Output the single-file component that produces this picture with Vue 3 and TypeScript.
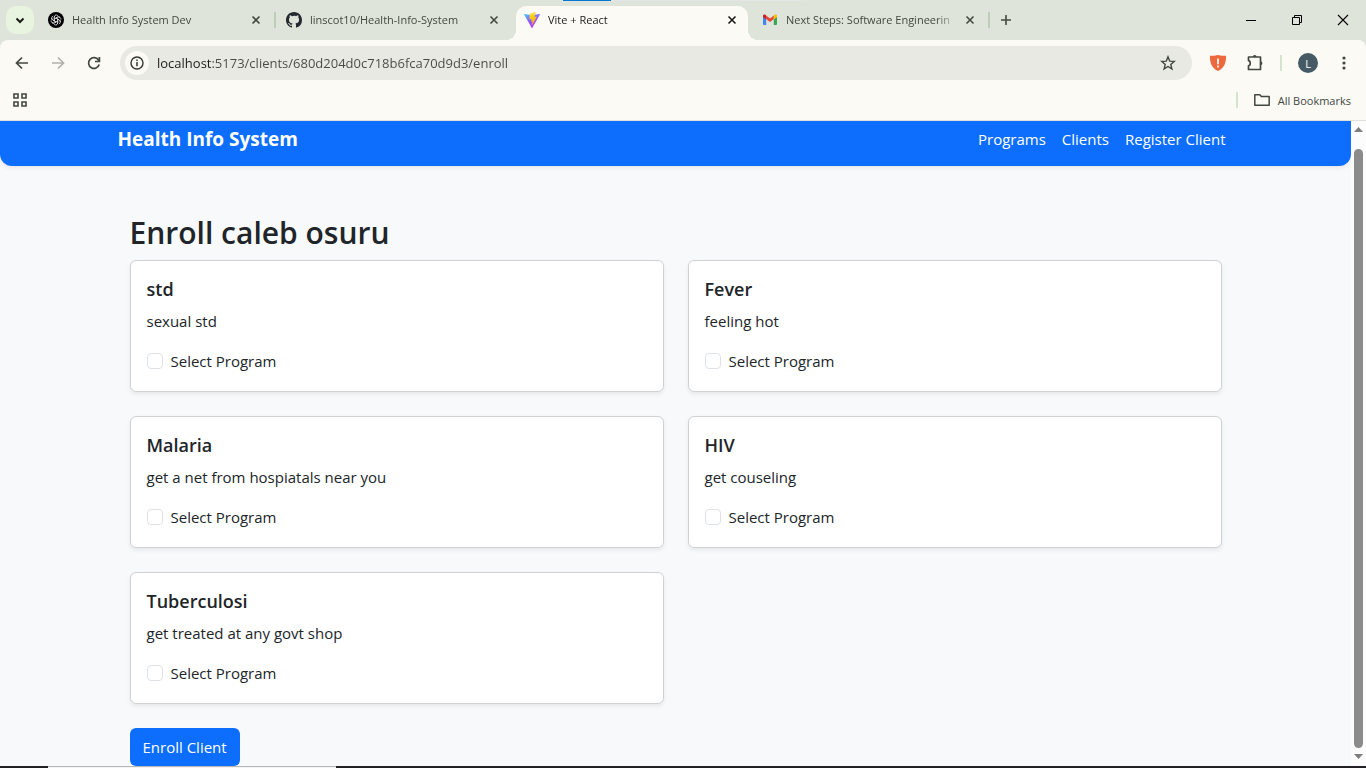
<script setup lang="ts">
import { ref } from 'vue'

interface Tab {
  id: string
  title: string
  active?: boolean
  separator?: boolean
}

interface Program {
  id: string
  name: string
  description: string
}

const tabs: Tab[] = [
  { id: 'chat', title: 'Health Info System Dev', separator: true },
  { id: 'github', title: 'linscot10/Health-Info-System' },
  { id: 'vite', title: 'Vite + React', active: true },
  { id: 'gmail', title: 'Next Steps: Software Engineerin', separator: true },
]

const petals = [0, 60, 120, 180, 240, 300]

const address = ref('localhost:5173/clients/680d204d0c718b6fca70d9d3/enroll')

const programs: Program[] = [
  { id: 'std', name: 'std', description: 'sexual std' },
  { id: 'fever', name: 'Fever', description: 'feeling hot' },
  { id: 'malaria', name: 'Malaria', description: 'get a net from hospiatals near you' },
  { id: 'hiv', name: 'HIV', description: 'get couseling' },
  { id: 'tb', name: 'Tuberculosi', description: 'get treated at any govt shop' },
]

const selected = ref<string[]>([])
</script>

<template>
  <div class="window">
    <div class="load-bar"><span class="load-done"></span><span class="load-rest"></span></div>

    <header class="tab-strip">
      <button class="tab-search" aria-label="Search tabs">
        <svg width="16" height="16" viewBox="0 0 16 16"><path d="M4.5 6.5 8 10l3.500-3.500" fill="none" stroke="#1b1c18" stroke-width="2" /></svg>
      </button>
      <div class="tabs">
        <div v-for="tab in tabs" :key="tab.id" class="tab" :class="{ active: tab.active, separated: tab.separator }">
          <svg v-if="tab.id === 'chat'" class="favicon" viewBox="0 0 16 16">
            <circle cx="8" cy="8" r="8" fill="#000" />
            <g fill="none" stroke="#d8d8d8" stroke-width="0.8">
              <path v-for="angle in petals" :key="angle" :transform="`rotate(${angle} 8 8)`" d="M6.300 9V5.200a2.200 2.200 0 0 1 3.700-1.600M6.300 7l3.300-1.900a2.200 2.200 0 0 1 2.400.2" />
            </g>
          </svg>
          <svg v-else-if="tab.id === 'github'" class="favicon" viewBox="0 0 16 16">
            <path fill="#24292f" d="M8 0C3.580 0 0 3.580 0 8c0 3.540 2.290 6.530 5.470 7.590.4.070.550-.170.550-.380 0-.190-.010-.820-.010-1.490-2.010.370-2.530-.490-2.690-.940-.090-.230-.480-.940-.820-1.130-.280-.150-.680-.520-.010-.530.630-.010 1.080.580 1.230.820.720 1.210 1.870.870 2.330.660.070-.520.280-.870.510-1.070-1.780-.200-3.640-.890-3.640-3.950 0-.870.310-1.590.820-2.150-.080-.200-.360-1.020.080-2.120 0 0 .670-.210 2.200.820A7.640 7.640 0 0 1 8 3.860c.680 0 1.360.090 2 .270 1.530-1.040 2.200-.820 2.200-.820.440 1.100.160 1.920.080 2.120.510.560.820 1.270.820 2.150 0 3.070-1.870 3.750-3.650 3.950.290.250.540.730.540 1.480 0 1.070-.010 1.930-.010 2.200 0 .210.150.460.550.380A8.010 8.010 0 0 0 16 8c0-4.420-3.580-8-8-8z" />
          </svg>
          <svg v-else-if="tab.id === 'vite'" class="favicon" viewBox="0 0 16 16">
            <defs>
              <linearGradient id="vite-body" x1="0" y1="0" x2="0.6" y2="1"><stop offset="0" stop-color="#41d1ff" /><stop offset="0.5" stop-color="#8a62fd" /><stop offset="1" stop-color="#bd34fe" /></linearGradient>
              <linearGradient id="vite-bolt" x1="0.4" y1="0" x2="0.6" y2="1"><stop offset="0" stop-color="#ffea83" /><stop offset="0.25" stop-color="#ffcf20" /><stop offset="1" stop-color="#ffa800" /></linearGradient>
            </defs>
            <path d="M15.900 2.600 8.400 15.700a.5.5 0 0 1-.8 0L.1 2.600a.4.4 0 0 1 .5-.6L8 3.300l7.400-1.300a.4.4 0 0 1 .5.6Z" fill="url(#vite-body)" />
            <path d="M11.500.1 6 1.200a.2.2 0 0 0-.2.2L5.500 7a.2.2 0 0 0 .3.2l1.500-.3a.2.2 0 0 1 .3.200l-.5 2.300c0 .2.100.3.200.2l1-.300c.100 0 .300.100.200.300l-.7 3.500c0 .200.300.300.400.100L12.600 4.900a.2.2 0 0 0-.2-.3l-1.600.3c-.200 0-.3-.100-.2-.3l1.200-4.200a.2.2 0 0 0-.3-.3Z" fill="url(#vite-bolt)" />
          </svg>
          <svg v-else class="favicon" viewBox="0 0 16 16">
            <path d="M1 4.500 4.200 7v6H2a1 1 0 0 1-1-1Z" fill="#4285f4" />
            <path d="M15 4.500 11.800 7v6H14a1 1 0 0 0 1-1Z" fill="#34a853" />
            <path d="M4.200 7V3.600L8 6.400l3.800-2.800V7L8 9.900Z" fill="#ea4335" />
            <path d="M1 5v-.900C1 2.500 2.700 2.300 3.600 3l.6.600V7.400Z" fill="#c5221f" />
            <path d="M15 5v-.900C15 2.500 13.300 2.300 12.400 3l-.6.600V7.400Z" fill="#fbbc04" />
          </svg>
          <span class="tab-title">{{ tab.title }}</span>
          <button class="tab-close" :aria-label="`Close ${tab.title}`">
            <svg width="16" height="16" viewBox="0 0 16 16"><path d="m4.500 4.500 7 7m0-7-7 7" fill="none" stroke="currentColor" stroke-width="1.600" /></svg>
          </button>
        </div>
      </div>
      <button class="new-tab" aria-label="New tab">
        <svg width="16" height="16" viewBox="0 0 16 16"><path d="M8 3v10M3 8h10" stroke="#43493e" stroke-width="1.600" /></svg>
      </button>
      <div class="window-buttons">
        <button aria-label="Minimize"><svg width="12" height="12" viewBox="0 0 12 12"><path d="M1 6.500h10" stroke="#000" /></svg></button>
        <button aria-label="Restore"><svg width="12" height="12" viewBox="0 0 12 12"><path d="M1.500 3.500h7v7h-7zM3.500 3.500v-2h7v7h-2" fill="none" stroke="#000" /></svg></button>
        <button aria-label="Close window"><svg width="12" height="12" viewBox="0 0 12 12"><path d="m1 1 10 10M11 1 1 11" stroke="#000" stroke-width="1.100" /></svg></button>
      </div>
    </header>

    <div class="chrome">
      <div class="toolbar">
        <div class="nav-buttons">
          <button aria-label="Back"><svg width="16" height="16" viewBox="0 0 16 16"><path d="M14 8H3M8 2.500 2.500 8 8 13.500" fill="none" stroke="#43483f" stroke-width="1.700" /></svg></button>
          <button aria-label="Forward"><svg width="16" height="16" viewBox="0 0 16 16"><path d="M2 8h11M8 2.500 13.500 8 8 13.500" fill="none" stroke="#b0b2ab" stroke-width="1.700" /></svg></button>
          <button aria-label="Reload"><svg width="16" height="16" viewBox="0 0 16 16"><path d="M13.200 9.500A5.400 5.400 0 1 1 12.500 5L13.200 6M13.400 2v4.500H9" fill="none" stroke="#43483f" stroke-width="1.700" /></svg></button>
        </div>
        <div class="address-bar">
          <button class="site-info" aria-label="View site information">
            <svg width="16" height="16" viewBox="0 0 16 16"><circle cx="8" cy="8" r="6" fill="none" stroke="#33362f" stroke-width="1.400" /><path d="M8 7v4.300M8 4.500v1.600" stroke="#33362f" stroke-width="1.500" /></svg>
          </button>
          <input v-model="address" class="url" type="text" aria-label="Address" spellcheck="false" />
          <button class="star" aria-label="Bookmark this tab">
            <svg width="16" height="16" viewBox="0 0 16 16"><path d="m8 1.800 1.700 4.300 4.600.3-3.500 3 1.100 4.500L8 11.500l-3.900 2.400 1.100-4.500-3.500-3 4.600-.3Z" fill="none" stroke="#43483f" stroke-width="1.400" /></svg>
          </button>
        </div>
        <div class="actions">
          <button aria-label="Shield extension"><svg width="18" height="18" viewBox="0 0 18 18"><path d="M9 1c2 .8 5 .9 8 .7.300 6.300-1.500 12.300-8 15.300C2.500 14 .7 8 1 1.700 4 1.900 7 1.800 9 1Z" fill="#ed683c" /><path d="M9 4.500v5.700M9 11.500v2" stroke="#fff" stroke-width="1.700" /></svg></button>
          <button aria-label="Extensions"><svg width="18" height="18" viewBox="0 0 18 18"><path d="M2.500 3h12v12.500h-12v-3.700c2.300-.200 2.300-4.900 0-5.100Z" fill="none" stroke="#43483f" stroke-width="1.700" stroke-linejoin="round" /><path d="M6.800 3a1.900 1.900 0 0 1 3.800 0ZM14.500 7.300a1.900 1.900 0 0 1 0 3.800Z" fill="#43483f" /></svg></button>
          <span class="divider"></span>
          <button class="avatar" aria-label="Profile">L</button>
          <button aria-label="Menu"><svg width="18" height="18" viewBox="0 0 18 18" fill="#43483f"><circle cx="9" cy="4" r="1.600" /><circle cx="9" cy="9" r="1.600" /><circle cx="9" cy="14" r="1.600" /></svg></button>
        </div>
      </div>
      <div class="bookmarks">
        <button aria-label="Apps"><svg width="16" height="16" viewBox="0 0 16 16"><path d="M2 2h4v4H2zM10 2h4v4h-4zM2 10h4v4H2zM10 10h4v4h-4z" fill="none" stroke="#43483f" stroke-width="1.600" /></svg></button>
        <span class="divider"></span>
        <button class="all-bookmarks">
          <svg width="16" height="16" viewBox="0 0 16 16"><path d="M.8 2.700h5l1.600 1.800h7.800v8.800H.8Z" fill="none" stroke="#43483f" stroke-width="1.500" stroke-linejoin="round" /></svg>
          All Bookmarks
        </button>
      </div>
    </div>

    <div class="viewport">
      <div class="page">
        <nav class="navbar">
          <div class="container nav-inner">
            <a class="brand" href="#home">Health Info System</a>
            <div class="nav-links">
              <a href="#programs">Programs</a>
              <a href="#clients">Clients</a>
              <a href="#register">Register Client</a>
            </div>
          </div>
        </nav>
        <main class="container">
          <form class="enroll" @submit.prevent>
            <h2>Enroll caleb osuru</h2>
            <div class="grid">
              <section v-for="program in programs" :key="program.id" class="card">
                <h5>{{ program.name }}</h5>
                <p>{{ program.description }}</p>
                <label class="check" :for="`program-${program.id}`">
                  <input :id="`program-${program.id}`" v-model="selected" type="checkbox" :value="program.id" />
                  Select Program
                </label>
              </section>
            </div>
            <button class="submit" type="submit">Enroll Client</button>
          </form>
        </main>
      </div>
      <div class="scrollbar">
        <svg width="9" height="5" viewBox="0 0 9 5"><path d="M0 5 4.500 0 9 5Z" fill="#7d7d7d" /></svg>
        <span class="thumb"></span>
        <svg width="9" height="5" viewBox="0 0 9 5"><path d="M0 0h9L4.500 5Z" fill="#7d7d7d" /></svg>
      </div>
    </div>

    <div class="taskbar"><span class="task-start"></span><span class="task-search"></span><span class="task-rest"></span></div>
  </div>
</template>

<style>
body {
  margin: 0;
  overflow: hidden;
}
</style>

<style scoped>
.window {
  position: relative;
  display: flex;
  flex-direction: column;
  height: 100vh;
  overflow: hidden;
  background: #dee4d9;
  font-family: "Open Sans", "Noto Sans", sans-serif;
}

*, *::before, *::after {
  box-sizing: border-box;
}

button {
  display: flex;
  align-items: center;
  justify-content: center;
  padding: 0;
  border: 0;
  background: none;
  color: inherit;
  font: inherit;
}

svg {
  flex: none;
}

.load-bar {
  position: absolute;
  top: 0;
  left: 563px;
  display: flex;
  height: 1px;
}
.load-done {
  width: 48px;
  background: #0078d4;
}
.load-rest {
  width: 193px;
  background: #e3e4e3;
}

.tab-strip {
  display: flex;
  flex: none;
  align-items: center;
  height: 40px;
  padding-left: 6px;
}
.tab-search {
  width: 28px;
  height: 28px;
  margin-right: 6px;
  border-radius: 10px;
  background: #e8f3e0;
}
.tabs {
  display: flex;
  align-self: stretch;
}
.tab {
  position: relative;
  display: flex;
  align-items: center;
  width: 238px;
  padding-left: 8px;
  color: #43493e;
}
.tab.separated::after {
  position: absolute;
  top: 12px;
  right: 2px;
  width: 2px;
  height: 16px;
  background: #bdcdb7;
  content: "";
}
.tab.active {
  width: 232px;
  margin: 6px 6px 0 0;
  padding-bottom: 6px;
  border-radius: 10px 10px 0 0;
  background: #fbfaf5;
  color: #1b1c18;
}
.tab.active::before,
.tab.active::after {
  position: absolute;
  bottom: 0;
  width: 10px;
  height: 10px;
  content: "";
}
.tab.active::before {
  right: 100%;
  background: radial-gradient(circle at 0 0, transparent 10px, #fbfaf5 10px);
}
.tab.active::after {
  left: 100%;
  background: radial-gradient(circle at 100% 0, transparent 10px, #fbfaf5 10px);
}
.favicon {
  width: 16px;
  height: 16px;
  margin-right: 8px;
}
.tab-title {
  width: 168px;
  overflow: hidden;
  font-size: 11px;
  line-height: 16px;
  white-space: nowrap;
  mask-image: linear-gradient(90deg, #000 150px, transparent 172px);
}
.tab-close {
  width: 16px;
  height: 16px;
  margin-left: 8px;
}
.new-tab {
  width: 28px;
  height: 28px;
}
.window-buttons {
  display: flex;
  align-self: stretch;
  margin-left: auto;
}
.window-buttons button {
  width: 46px;
}

.chrome {
  flex: none;
  border-bottom: 1px solid #dfe0da;
  border-radius: 8px 8px 0 0;
  background: #fbfaf5;
}
.toolbar {
  display: flex;
  align-items: center;
  height: 46px;
  padding: 0 13px 0 6px;
}
.nav-buttons {
  display: flex;
  gap: 4px;
  margin-right: 10px;
}
.nav-buttons button {
  width: 32px;
  height: 32px;
}
.address-bar {
  display: flex;
  flex: 1;
  align-items: center;
  height: 34px;
  padding: 0 16px 0 5px;
  border-radius: 17px;
  background: #e8e9e3;
}
.site-info {
  width: 24px;
  height: 24px;
  margin-right: 8px;
  border-radius: 50%;
  background: #fbfaf5;
}
.url {
  flex: 1;
  min-width: 0;
  padding: 0;
  border: 0;
  outline: 0;
  background: linear-gradient(90deg, #1b1c18 54px, #474a44 54px);
  background-clip: text;
  color: transparent;
  font: inherit;
  font-size: 13px;
  line-height: 20px;
}
.actions {
  display: flex;
  align-items: center;
  margin-left: 17px;
}
.actions button + button {
  margin-left: 19px;
}
.divider {
  width: 2px;
  height: 16px;
  background: #d5e4cf;
}
.actions .divider {
  margin: 0 16px;
}
.actions .avatar {
  width: 20px;
  height: 20px;
  border-radius: 50%;
  background: #455a64;
  color: #fff;
  font-size: 11px;
}
.actions .avatar + button {
  margin-left: 17px;
}
.bookmarks {
  display: flex;
  align-items: center;
  height: 34px;
  padding: 0 15px 6px 12px;
}
.bookmarks .divider {
  margin-left: auto;
}
.all-bookmarks {
  gap: 8px;
  margin-left: 16px;
  color: #43483f;
  font-size: 11px;
}

.viewport {
  display: flex;
  flex: 1;
  min-height: 0;
}
.page {
  flex: 1;
  min-width: 0;
  overflow: hidden;
  background: #f8f9fb;
  color: #212529;
  font-size: 15px;
  line-height: 24px;
}
.container {
  max-width: 1140px;
  margin: 0 auto;
  padding: 0 12px;
}
.navbar {
  padding: 6px 0 15px;
  border-radius: 0 0 12px 12px;
  background: #0d6efd;
  box-shadow: 0 2px 4px rgba(0, 0, 0, 0.075);
}
.nav-inner {
  display: flex;
  align-items: center;
  justify-content: space-between;
}
.navbar a {
  color: #fff;
  text-decoration: none;
}
.brand {
  font-size: 19px;
  font-weight: 700;
}
.nav-links {
  display: flex;
  gap: 16px;
  margin-right: 8px;
}
.enroll {
  padding: 48px 12px 0;
}
h2 {
  margin: 0 0 8px;
  font-size: 30px;
  font-weight: 600;
  line-height: 38px;
}
.grid {
  display: grid;
  grid-template-columns: 1fr 1fr;
  gap: 24px;
}
.card {
  padding: 16px 16px 18px;
  border: 1px solid #d0d2d5;
  border-radius: 6px;
  background: #fff;
  box-shadow: 0 2px 4px rgba(0, 0, 0, 0.075);
}
h5 {
  margin: 0 0 8px;
  font-size: 18px;
  font-weight: 600;
  line-height: 24px;
}
p {
  margin: 0 0 16px;
}
.check {
  display: flex;
  align-items: center;
  gap: 8px;
}
.check input {
  width: 16px;
  height: 16px;
  margin: 0;
  border: 1px solid #dee2e6;
  border-radius: 4px;
  appearance: none;
  background: #fff;
}
.check input:checked {
  border-color: #0d6efd;
  background: #0d6efd;
}
.submit {
  height: 38px;
  margin-top: 24px;
  padding: 0 13px;
  border-radius: 6px;
  background: #0d6efd;
  color: #fff;
}

.scrollbar {
  display: flex;
  flex: none;
  flex-direction: column;
  align-items: center;
  width: 15px;
  padding: 6px 0 7px;
  background: #fcfcfc;
}
.thumb {
  flex: 1;
  width: 9px;
  margin: 17px 0 6px;
  border-radius: 5px;
  background: #8b8b8b;
}

.taskbar {
  display: flex;
  flex: none;
  height: 2px;
}
.task-start {
  width: 48px;
  background: #222024;
}
.task-search {
  width: 288px;
  border-top: 1px solid #b8b8b8;
  background: #f3f3f5;
}
.task-rest {
  flex: 1;
  background: #222024;
}
</style>
